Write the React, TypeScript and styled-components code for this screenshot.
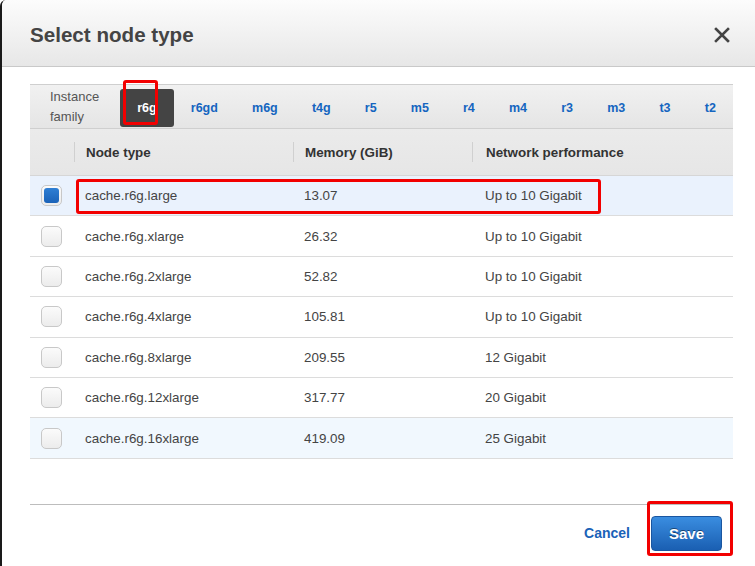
import React from "react";
import styled, { createGlobalStyle } from "styled-components";

const Global = createGlobalStyle`
  html, body { margin: 0; padding: 0; background: #fff; }
  body { font-family: "Liberation Sans", Arial, sans-serif; }
  * { box-sizing: border-box; }
`;

const Modal = styled.div`
  width: 755px;
  height: 566px;
  background: #fff;
  border-left: 2px solid #1a1a1a;
  border-top-left-radius: 6px;
  display: flex;
  flex-direction: column;
  overflow: hidden;
`;

const Header = styled.div`
  height: 67px;
  flex: none;
  display: flex;
  align-items: center;
  justify-content: space-between;
  padding: 4px 24px 0 28px;
  background: linear-gradient(#fcfcfc, #e7e7e7);
  border-bottom: 1px solid #c9c9c9;
`;

const Title = styled.h1`
  margin: 0;
  font-size: 20.6px;
  font-weight: bold;
  color: #444;
`;

const Close = styled.button`
  border: none;
  background: none;
  padding: 0;
  width: 18px;
  height: 18px;
  display: flex;
  align-items: center;
  justify-content: center;
`;

const Body = styled.div`
  padding: 17px 22px 0 28px;
  flex: 1;
  display: flex;
  flex-direction: column;
`;

const TabBar = styled.div`
  height: 45px;
  display: flex;
  align-items: flex-end;
  padding-bottom: 1px;
  background: linear-gradient(#f1f1f1, #e5e5e5);
  border-top: 1px solid #cfcfcf;
  border-bottom: 1px solid #cfcfcf;
`;

const FamilyLabel = styled.div`
  align-self: center;
  padding: 2px 21px 0 20px;
  font-size: 13px;
  line-height: 20px;
  color: #555;
`;

const Tabs = styled.div`
  flex: 1;
  display: flex;
  justify-content: space-between;
  align-items: flex-end;
`;

const Tab = styled.div<{ $active?: boolean }>`
  position: relative;
  height: 38px;
  padding: 0 17px;
  display: flex;
  align-items: center;
  font-size: 12.5px;
  font-weight: bold;
  border-radius: 3px;
  color: ${(p) => (p.$active ? "#fff" : "#1565c0")};
  background: ${(p) => (p.$active ? "#444" : "transparent")};
`;

const Mark = styled.div<{ $l: number; $t: number; $w: number; $h: number }>`
  position: absolute;
  left: ${(p) => p.$l}px;
  top: ${(p) => p.$t}px;
  width: ${(p) => p.$w}px;
  height: ${(p) => p.$h}px;
  border: 3px solid #f20000;
  border-radius: 3px;
  pointer-events: none;
`;

const Grid = styled.div`
  display: grid;
  grid-template-columns: 44px 219px 179px 1fr;
  align-items: center;
`;

const HeadRow = styled(Grid)`
  height: 47px;
  background: linear-gradient(#ebebeb, #e6e6e6);
  border-bottom: 1px solid #d6d6d6;
`;

const HeadCell = styled.div<{ $pad?: number }>`
  height: 20px;
  display: flex;
  align-items: center;
  padding-left: ${(p) => p.$pad ?? 11}px;
  border-left: 1px solid #d0d0d0;
  font-size: 13.4px;
  font-weight: bold;
  color: #333;
  &:first-child { border-left: none; }
`;

const Row = styled(Grid)<{ $bg?: string }>`
  position: relative;
  height: 40.4px;
  background: ${(p) => p.$bg ?? "#fff"};
  border-bottom: 1px solid #dcdcdc;
`;

const Cell = styled.div<{ $pad?: number }>`
  padding-left: ${(p) => p.$pad ?? 11}px;
  font-size: 13.4px;
  color: #444;
`;

const CheckCell = styled.div`
  display: flex;
  justify-content: flex-end;
  padding-right: 12px;
`;

const Check = styled.div<{ $on?: boolean }>`
  width: 21px;
  height: 21px;
  border-radius: 5px;
  border: 1px solid #c8c8c8;
  background: linear-gradient(#fbfbfb, #ececec);
  padding: 2px;
  display: flex;
  & > span {
    flex: 1;
    border-radius: 3px;
    background: ${(p) => (p.$on ? "linear-gradient(#2f7fd4, #1a62b8)" : "transparent")};
  }
`;

const Footer = styled.div`
  margin-top: 45px;
  border-top: 1px solid #bdbdbd;
  height: 58px;
  display: flex;
  align-items: center;
  justify-content: flex-end;
  gap: 21px;
  padding: 0 11px 0 0;
`;

const Cancel = styled.button`
  border: none;
  background: none;
  padding: 0;
  font-family: inherit;
  font-size: 14px;
  font-weight: bold;
  color: #1a62b8;
`;

const Save = styled.button`
  position: relative;
  width: 71px;
  height: 35px;
  border: 1px solid #1a56a0;
  border-radius: 4px;
  background: linear-gradient(#3a8de0, #1a5fb2);
  color: #fff;
  font-family: inherit;
  font-size: 15px;
  font-weight: bold;
  text-shadow: 0 -1px 0 rgba(0, 0, 0, 0.45);
  padding: 0;
`;

const families = ["r6g", "r6gd", "m6g", "t4g", "r5", "m5", "r4", "m4", "r3", "m3", "t3", "t2"];

const rows = [
  { t: "cache.r6g.large", m: "13.07", n: "Up to 10 Gigabit" },
  { t: "cache.r6g.xlarge", m: "26.32", n: "Up to 10 Gigabit" },
  { t: "cache.r6g.2xlarge", m: "52.82", n: "Up to 10 Gigabit" },
  { t: "cache.r6g.4xlarge", m: "105.81", n: "Up to 10 Gigabit" },
  { t: "cache.r6g.8xlarge", m: "209.55", n: "12 Gigabit" },
  { t: "cache.r6g.12xlarge", m: "317.77", n: "20 Gigabit" },
  { t: "cache.r6g.16xlarge", m: "419.09", n: "25 Gigabit" },
];

export default function App() {
  return (
    <>
      <Global />
      <Modal>
        <Header>
          <Title>Select node type</Title>
          <Close aria-label="Close">
            <svg width="16" height="16" viewBox="0 0 16 16">
              <path d="M2 2 L14 14 M14 2 L2 14" stroke="#444" strokeWidth="2.6" strokeLinecap="square" />
            </svg>
          </Close>
        </Header>
        <Body>
          <TabBar>
            <FamilyLabel>
              Instance
              <br />
              family
            </FamilyLabel>
            <Tabs>
              {families.map((f, i) => (
                <Tab key={f} $active={i === 0}>
                  {f}
                  {i === 0 && <Mark $l={3} $t={-9} $w={35} $h={45} />}
                </Tab>
              ))}
            </Tabs>
          </TabBar>
          <HeadRow>
            <HeadCell />
            <HeadCell>Node type</HeadCell>
            <HeadCell>Memory (GiB)</HeadCell>
            <HeadCell $pad={13}>Network performance</HeadCell>
          </HeadRow>
          {rows.map((r, i) => (
            <Row key={r.t} $bg={i === 0 ? "#eaf2fd" : i === 6 ? "#f1f8fe" : undefined}>
              <CheckCell>
                <Check $on={i === 0}>
                  <span />
                </Check>
              </CheckCell>
              <Cell>{r.t}</Cell>
              <Cell>{r.m}</Cell>
              <Cell $pad={13}>{r.n}</Cell>
              {i === 0 && <Mark $l={46} $t={3} $w={525} $h={35} />}
            </Row>
          ))}
          <Footer>
            <Cancel>Cancel</Cancel>
            <Save>
              Save
              <Mark $l={-5} $t={-16} $w={86} $h={55} />
            </Save>
          </Footer>
        </Body>
      </Modal>
    </>
  );
}
